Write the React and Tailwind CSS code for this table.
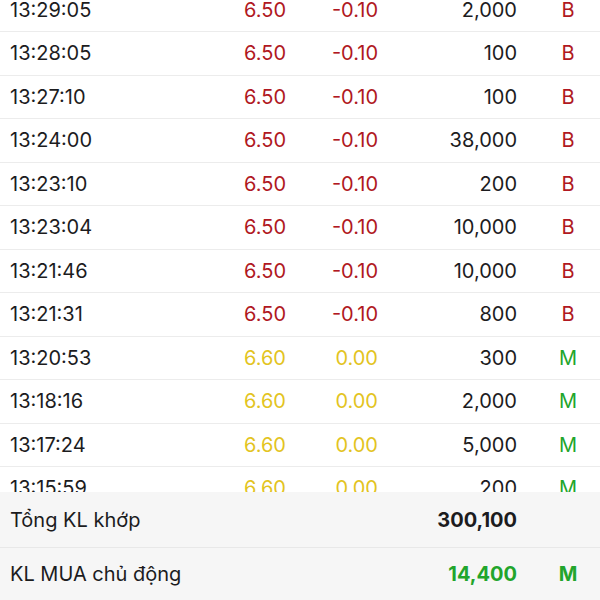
const trades = [
  ["13:29:05", "6.50", "-0.10", "2,000", "B"],
  ["13:28:05", "6.50", "-0.10", "100", "B"],
  ["13:27:10", "6.50", "-0.10", "100", "B"],
  ["13:24:00", "6.50", "-0.10", "38,000", "B"],
  ["13:23:10", "6.50", "-0.10", "200", "B"],
  ["13:23:04", "6.50", "-0.10", "10,000", "B"],
  ["13:21:46", "6.50", "-0.10", "10,000", "B"],
  ["13:21:31", "6.50", "-0.10", "800", "B"],
  ["13:20:53", "6.60", "0.00", "300", "M"],
  ["13:18:16", "6.60", "0.00", "2,000", "M"],
  ["13:17:24", "6.60", "0.00", "5,000", "M"],
  ["13:15:59", "6.60", "0.00", "200", "M"],
];

function Row({ t }) {
  const [time, price, change, vol, side] = t;
  const down = side === "B";
  const color = down ? "text-[#b01822]" : "text-[#e3c41f]";
  return (
    <div className="flex items-center h-[43.5px] border-b border-[#ececec] shrink-0">
      <div className="w-[180px] shrink-0 pl-[10px] text-[#1c1c1e]">{time}</div>
      <div className={`w-[106px] shrink-0 text-right ${color}`}>{price}</div>
      <div className={`w-[92px] shrink-0 text-right ${color}`}>{change}</div>
      <div className="w-[139px] shrink-0 text-right text-[#1c1c1e]">{vol}</div>
      <div className={`w-[83px] shrink-0 pl-[19px] text-center ${down ? "text-[#b01822]" : "text-[#22a52c]"}`}>{side}</div>
    </div>
  );
}

export default function App() {
  return (
    <div className="h-[600px] w-[600px] flex flex-col bg-white overflow-hidden text-[20px]" style={{ fontFamily: "Inter, 'Noto Sans', sans-serif" }}>
      <div className="flex-1 overflow-hidden">
        <div className="flex flex-col mt-[-11.5px]">
          {trades.map((t) => (
            <Row key={t[0]} t={t} />
          ))}
        </div>
      </div>
      <div className="bg-[#f6f6f6] shrink-0">
        <div className="flex items-center h-[56px] border-b border-[#e8e8e8]">
          <div className="flex-1 pl-[10px] text-[#1c1c1e]">Tổng KL khớp</div>
          <div className="text-right font-bold text-[#1c1c1e]">300,100</div>
          <div className="w-[83px] shrink-0" />
        </div>
        <div className="flex items-center h-[52px]">
          <div className="flex-1 pl-[10px] text-[#1c1c1e]">KL MUA chủ động</div>
          <div className="text-right font-bold text-[#22a52c]">14,400</div>
          <div className="w-[83px] shrink-0 pl-[19px] text-center font-bold text-[#22a52c]">M</div>
        </div>
      </div>
    </div>
  );
}
